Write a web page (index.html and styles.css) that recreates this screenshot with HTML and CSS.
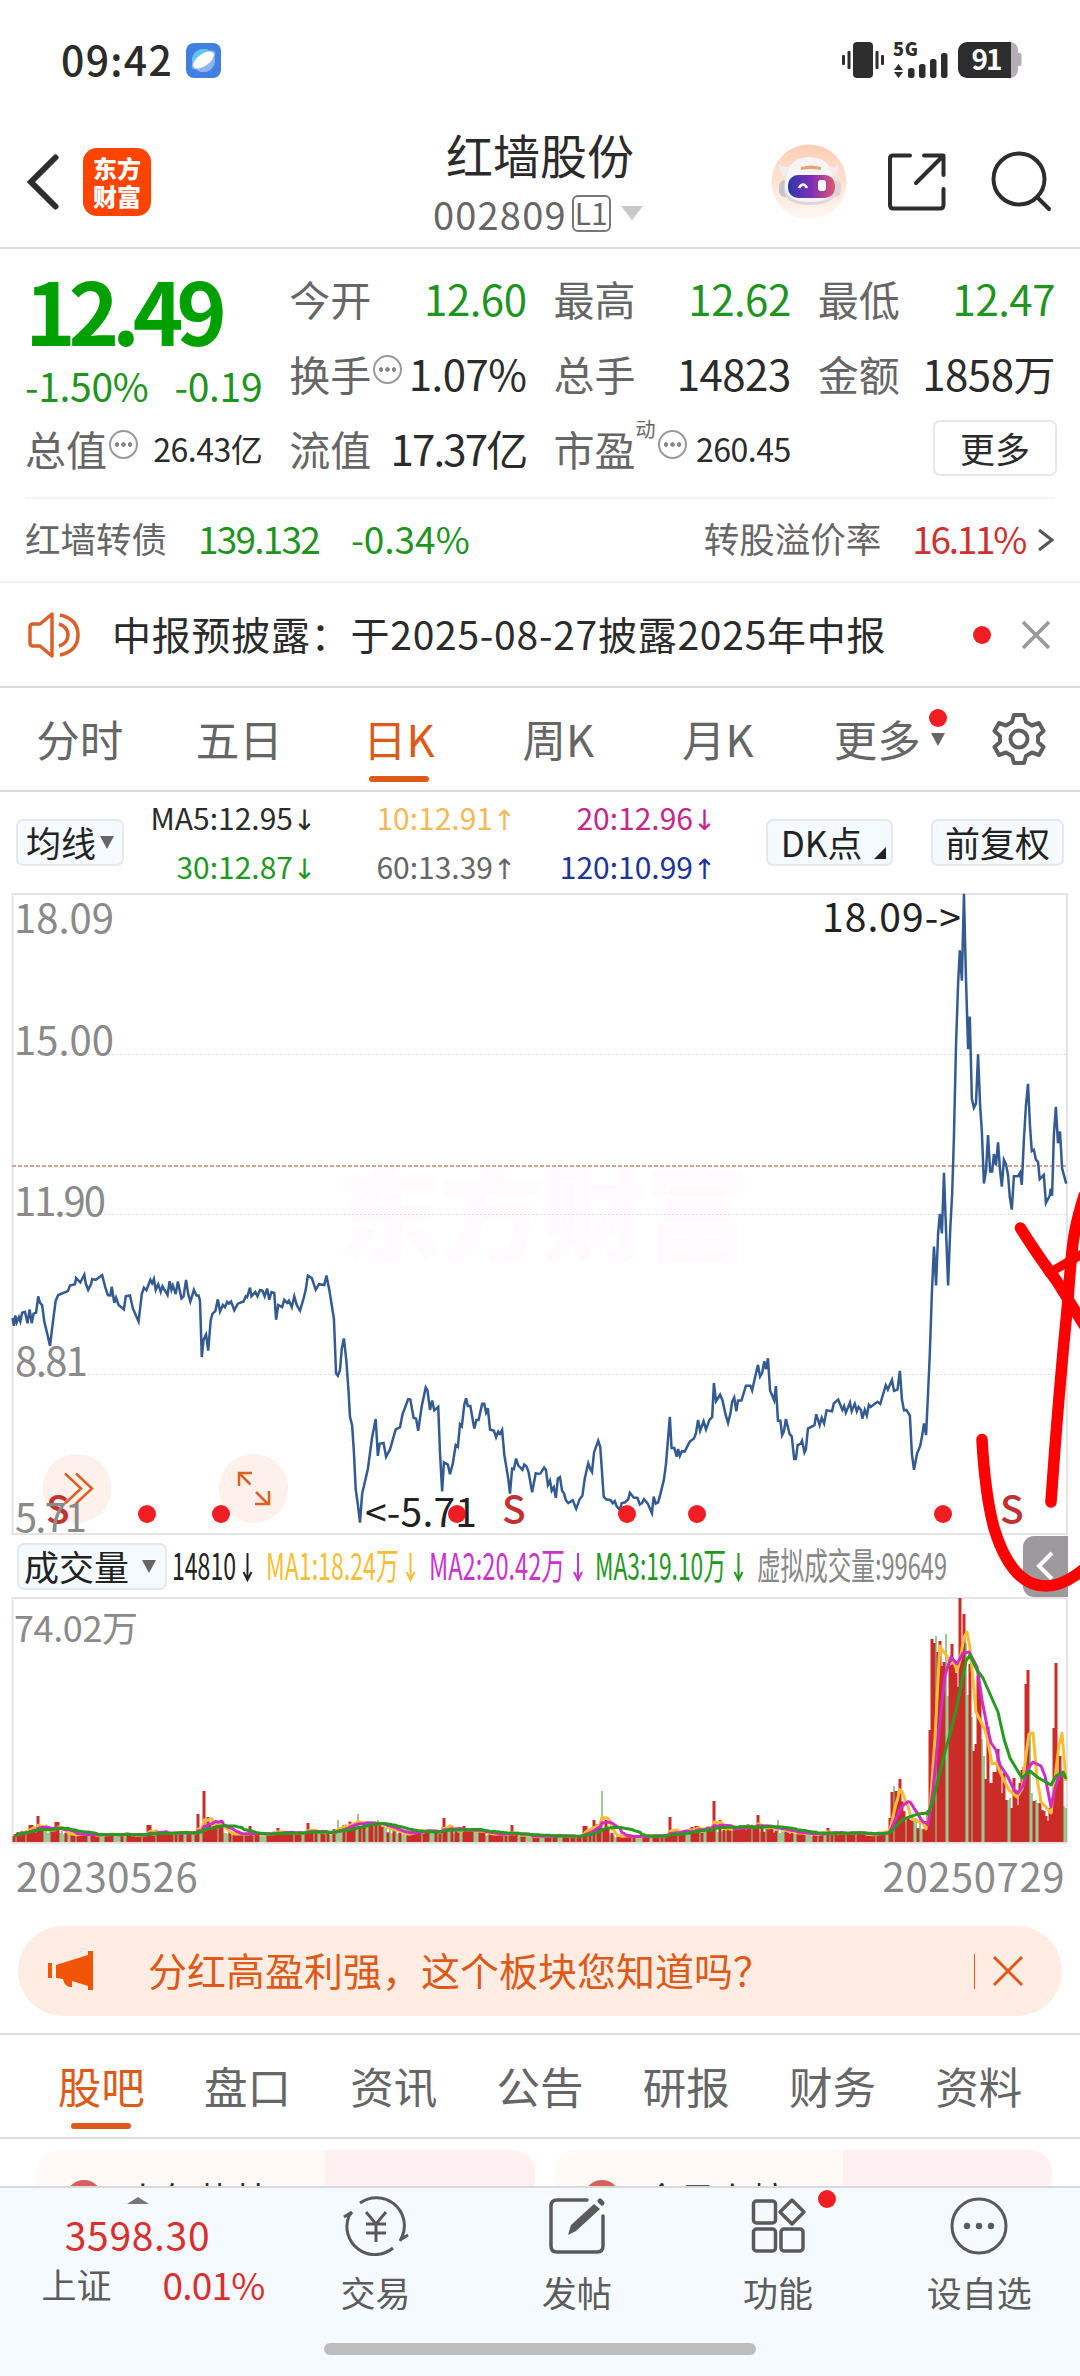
FILE: index.html
```html
<!DOCTYPE html>
<html lang="zh-CN">
<head>
    <meta charset="UTF-8">
    <meta name="viewport" content="width=device-width, initial-scale=1.0">
    <title>红墙股份 002809</title>
    <link rel="stylesheet" href="styles.css">
</head>
<body>
    <div class="page">
        <!-- 状态栏 -->
        <div class="status-bar">
            <span class="time">09:42</span>
            <svg class="app-dot" width="35" height="35" viewBox="0 0 35 35">
                <rect width="35" height="35" rx="8" fill="#4180df"/>
                <circle cx="17.5" cy="17.5" r="11.5" fill="#8fb2f0"/>
                <path d="M6 18a11.500 11.500 0 0 1 21-7L8 24z" fill="#5cc8fa"/>
                <ellipse cx="17.500" cy="17" rx="14" ry="6" fill="#8fb2f0" transform="rotate(-36 17.5 17)"/>
                <ellipse cx="17.500" cy="17" rx="12" ry="6" fill="#fff" transform="rotate(-36 17.5 17)"/>
            </svg>
            <svg class="status-icons" width="182" height="44" viewBox="840 38 182 44">
                <g fill="#2d2d2d">
                    <rect x="852" y="42" width="20" height="36" rx="4"/>
                    <rect x="841" y="55" width="3" height="10" rx="1"/>
                    <rect x="846.500" y="51" width="3" height="18" rx="1"/>
                    <rect x="874.500" y="51" width="3" height="18" rx="1"/>
                    <rect x="880" y="55" width="3" height="10" rx="1"/>
                    <path d="M893 70l4.500-6 4.500 6zM893 72h9l-4.500 6z"/>
                    <rect x="907" y="68" width="6.500" height="10" rx="2.500"/>
                    <rect x="918" y="64" width="6.500" height="14" rx="2.500"/>
                    <rect x="929" y="59" width="6.500" height="19" rx="2.500"/>
                    <rect x="940" y="53" width="6.500" height="25" rx="2.500"/>
                </g>
                <path d="M1005 42h4a8 8 0 0 1 8 8v3h2q1.500 0 1.500 1.500v10q0 1.500-1.500 1.500h-2v4a8 8 0 0 1-8 8h-4z" fill="#b4afb4"/>
                <path d="M1010 42h-44a9 9 0 0 0-9 9v18a9 9 0 0 0 9 9h44z" fill="#2d2d2d"/>
                <text class="net" x="892" y="55.500" textLength="25">5G</text>
                <text class="batt" x="970.500" y="70" textLength="31">91</text>
            </svg>
        </div>

        <!-- 标题 -->
        <header class="header">
            <svg class="back" width="34" height="56" viewBox="0 0 34 56"><path d="M29.500 3.500L5 28l24.500 24.500" fill="none" stroke="#2d2d2d" stroke-width="6" stroke-linecap="round" stroke-linejoin="miter"/></svg>
            <div class="brand"><span>东方</span><span>财富</span></div>
            <div class="title">
                <h1>红墙股份</h1>
                <div class="code">002809<span class="level">L1</span><i class="tri-down light"></i></div>
            </div>
            <div class="actions">
                <svg width="76" height="76" viewBox="0 0 76 76">
                    <defs>
                        <linearGradient id="halo" x1="0" y1="0" x2="0" y2="1"><stop offset="0" stop-color="#ffcdb4"/><stop offset="1" stop-color="#fff8f5"/></linearGradient>
                        <linearGradient id="visor"><stop offset="0" stop-color="#2d39a8"/><stop offset=".5" stop-color="#7f2eb8"/><stop offset="1" stop-color="#e0566e"/></linearGradient>
                    </defs>
                    <circle cx="38" cy="38" r="37.500" fill="url(#halo)"/>
                    <path d="M8 19q3 6 13 3l-3 12q-11-4-10-15zM67 19q-2 7-11 3l3 13q10-5 8-16z" fill="#f1edf0"/>
                    <rect x="8" y="36" width="12" height="17" rx="6" fill="#c9c4cb"/>
                    <rect x="58" y="36" width="12" height="17" rx="6" fill="#d9d5da"/>
                    <path d="M13 45q0-30 25-31 26 0 27 31 0 16-26 16-26 0-26-16z" fill="#dcd7dd"/>
                    <path d="M14 42q0-28 24-29 25 0 26 29 0 16-25 16T14 42z" fill="#f7f4f6"/>
                    <path d="M30 23q10-3 20 0v3q-10-2-20 0z" fill="#e0a878"/>
                    <rect x="17" y="31" width="47" height="23" rx="10" fill="url(#visor)"/>
                    <path d="M28 44q4-7 8 0" fill="none" stroke="#fff" stroke-width="2.500"/>
                    <rect x="47" y="36" width="8" height="11" rx="3" fill="#fff"/>
                </svg>
                <svg width="58" height="58" viewBox="0 0 58 58" fill="none" stroke="#2d2d2d" stroke-width="4" stroke-linecap="round" stroke-linejoin="round">
                    <path d="M22 2.500H5q-3 0-3 3V52q0 3.500 3.500 3.500H52q3.500 0 3.500-3.500V36M36 2.500h19.500V22M55 3L28 30"/>
                </svg>
                <svg width="62" height="62" viewBox="0 0 62 62" fill="none" stroke="#2d2d2d" stroke-width="4" stroke-linecap="round">
                    <circle cx="28" cy="28" r="25.500"/><path d="M47 47l11 11"/>
                </svg>
            </div>
        </header>

        <!-- 行情 -->
        <section class="quote">
            <div class="col">
                <div class="price">12.49</div>
                <div class="change"><span>-1.50%</span><span>-0.19</span></div>
                <div class="cell"><label>总值</label><i class="info"></i><b class="small">26.43亿</b></div>
            </div>
            <div class="col">
                <div class="cell"><label>今开</label><b class="green">12.60</b></div>
                <div class="cell"><label>换手</label><i class="info"></i><b>1.07%</b></div>
                <div class="cell"><label>流值</label><b class="tight">17.37亿</b></div>
            </div>
            <div class="col">
                <div class="cell"><label>最高</label><b class="green">12.62</b></div>
                <div class="cell"><label>总手</label><b>14823</b></div>
                <div class="cell"><label>市盈</label><sup>动</sup><i class="info"></i><b class="small">260.45</b></div>
            </div>
            <div class="col">
                <div class="cell"><label>最低</label><b class="green">12.47</b></div>
                <div class="cell"><label>金额</label><b>1858万</b></div>
                <div class="cell"><button class="more">更多</button></div>
            </div>
        </section>

        <div class="bond">
            <span class="bond-name">红墙转债</span>
            <span class="green bond-price">139.132</span>
            <span class="green">-0.34%</span>
            <span class="bond-rate">转股溢价率</span>
            <span class="red">16.11%</span>
            <svg width="18" height="28" viewBox="0 0 18 28"><path d="M2 4l13 10L2 24" fill="none" stroke="#555" stroke-width="3"/></svg>
        </div>

        <div class="notice">
            <svg width="54" height="48" viewBox="0 0 54 48" fill="none" stroke="#d9602a" stroke-width="3.500" stroke-linejoin="round">
                <path d="M24 3v42L12 35H5q-3 0-3-3V16q0-3 3-3h7zM31 13q9 3 9 11t-9 11M32 4q18 4 18 20T32 44"/>
            </svg>
            <p>中报预披露：于2025-08-27披露2025年中报</p>
            <i class="dot"></i>
            <svg class="close" width="30" height="30" viewBox="0 0 30 30"><path d="M2 2l26 26M28 2L2 28" stroke="#999" stroke-width="3.500"/></svg>
        </div>

        <!-- 周期切换 -->
        <nav class="periods">
            <a>分时</a><a>五日</a><a class="on">日K</a><a>周K</a><a>月K</a>
            <a>更多<i class="dot badge"></i><i class="tri-down mark"></i></a>
            <svg width="54" height="56" viewBox="-27 -28 54 56" fill="none" stroke="#5f5f5f" stroke-width="4" stroke-linejoin="round">
                <path d="M-5-24H5L7-17 13-13.500 20-16 24.500-8 19-3V3L24.500 8 20 16 13 13.500 7 17 5 24H-5L-7 17-13 13.500-20 16-24.500 8-19 3V-3L-24.500-8-20-16-13-13.500-7-17z"/>
                <circle r="8.500"/>
            </svg>
        </nav>

        <div class="ma-row">
            <span class="chip">均线<i class="tri-down"></i></span>
            <div class="ma-list">
                <span>MA5:12.95<em>↓</em></span>
                <span class="c10">10:12.91<em>↑</em></span>
                <span class="c20">20:12.96<em>↓</em></span>
                <span class="c30">30:12.87<em>↓</em></span>
                <span class="c60">60:13.39<em>↑</em></span>
                <span class="c120">120:10.99<em>↑</em></span>
            </div>
            <span class="chip dk">DK点<i class="corner"></i></span>
            <span class="chip fq">前复权</span>
        </div>

        <!-- K线 -->
        <svg class="chart" width="1080" height="643" viewBox="0 892 1080 643">
            <text class="watermark" x="337" y="1254" textLength="412">东方财富</text>
            <g class="grid">
                <path d="M12 1054.500H1067M12 1214.500H1067M12 1374.500H1067" stroke-dasharray="2 2"/>
            </g>
            <rect class="frame" x="12.500" y="894" width="1054.500" height="640"/>
            <circle class="round-btn" cx="77" cy="1488.500" r="34.500"/>
            <circle class="round-btn" cx="253.500" cy="1488.500" r="34.500"/>
            <g class="btn-icon">
                <path d="M65 1473.500l16 15-16 15M76 1473.500l16 15-16 15"/>
                <path d="M252 1473h-13v13M239.500 1473.500l11 11M256 1492l12 12M269 1491v13h-14"/>
            </g>
            <path class="last-price" d="M12 1166H1067"/>
            <g transform="translate(0 880) scale(.35714 .43367)">
                <polyline class="price-line" points="35,1010 39,1028 43,1004 47,1020 53,1008 57,1018 62,998 70,996 77,1022 83,990 89,1022 94,1000 101,998 107,960 112,975 118,980 124,1018 132,1045 140,1074 148,1020 156,970 163,957 190,948 196,935 210,932 213,918 225,928 236,910 240,930 247,945 255,932 258,920 268,922 286,911 295,940 302,957 309,958 313,938 320,975 325,963 332,980 347,990 352,960 364,958 372,988 388,1018 397,955 403,940 410,946 421,922 426,930 431,920 436,945 443,932 450,950 455,937 469,957 475,925 480,945 484,935 492,955 498,926 508,965 514,960 521,922 527,955 533,972 543,945 550,958 556,958 560,970 565,1100 570,1060 577,1048 583,1085 590,1015 595,1000 603,994 610,967 616,995 624,980 630,985 636,973 641,977 647,972 656,992 666,977 682,972 688,960 692,962 700,940 704,960 715,950 721,960 728,946 735,947 741,960 748,942 754,968 760,950 768,952 773,1014 779,980 790,985 796,968 804,975 809,970 817,985 824,960 831,980 840,993 850,965 856,945 862,912 873,918 884,945 893,932 908,934 914,912 922,945 935,1012 941,1138 946,1143 952,1130 957,1080 963,1057 970,1110 976,1180 980,1238 986,1258 991,1320 996,1405 1002,1440 1008,1482 1014,1415 1030,1358 1042,1285 1052,1243 1058,1328 1063,1300 1074,1298 1081,1330 1092,1313 1108,1267 1120,1262 1127,1232 1143,1197 1149,1198 1158,1240 1165,1242 1171,1270 1181,1213 1192,1170 1197,1177 1204,1222 1210,1200 1216,1223 1227,1215 1232,1320 1238,1410 1243,1343 1254,1348 1260,1370 1268,1345 1276,1303 1282,1307 1288,1255 1293,1260 1300,1210 1305,1195 1310,1213 1317,1213 1328,1265 1334,1245 1340,1245 1350,1208 1356,1208 1361,1228 1366,1218 1372,1267 1383,1270 1389,1285 1395,1272 1400,1277 1406,1268 1412,1325 1423,1380 1428,1415 1434,1357 1439,1358 1445,1334 1451,1350 1463,1360 1468,1348 1474,1352 1480,1365 1490,1412 1500,1368 1512,1370"/>
            </g>
            <g transform="translate(540 880) scale(.34439 .43367)">
                <polyline class="price-line" points="0,1370 12,1355 17,1360 23,1395 29,1385 34,1408 40,1400 46,1425 52,1380 58,1377 64,1408 70,1415 75,1430 82,1437 95,1430 105,1450 115,1428 123,1420 130,1380 140,1345 146,1358 151,1365 157,1320 169,1293 175,1308 185,1422 192,1428 205,1430 211,1437 217,1432 222,1443 232,1453 237,1437 247,1435 256,1428 261,1413 272,1424 283,1425 290,1440 296,1437 302,1428 313,1438 325,1460 330,1422 336,1438 343,1435 350,1415 360,1382 366,1345 377,1238 382,1310 390,1310 397,1330 401,1312 406,1328 412,1317 420,1318 435,1295 447,1288 453,1275 459,1245 465,1270 475,1248 482,1267 492,1245 500,1238 505,1160 511,1202 523,1187 530,1200 538,1230 546,1252 553,1230 558,1203 564,1193 570,1225 575,1200 585,1200 598,1166 611,1166 616,1177 625,1145 633,1118 639,1145 645,1137 651,1110 656,1128 662,1103 668,1177 680,1200 685,1167 691,1247 698,1247 703,1280 708,1272 714,1243 725,1278 731,1283 738,1335 743,1335 748,1303 757,1300 761,1293 768,1320 772,1313 778,1265 797,1257 802,1232 812,1257 818,1240 825,1253 832,1223 848,1225 853,1207 866,1198 878,1222 883,1213 888,1228 895,1215 900,1205 905,1225 914,1208 920,1225 925,1215 932,1222 936,1242 943,1222 949,1235 955,1210 960,1215 980,1203 988,1208 1004,1165 1010,1175 1022,1153 1028,1178 1038,1175 1045,1132 1051,1198 1057,1223 1064,1222 1074,1235 1080,1325 1086,1360 1095,1322 1104,1305 1110,1280 1115,1253 1121,1280 1127,1180 1132,1090 1138,950 1144,845 1150,935 1156,815 1161,770 1167,815 1173,675 1180,830 1185,935 1191,810 1197,720 1202,590 1208,380 1214,240 1219,162 1225,232 1231,32 1237,230 1243,390 1248,315 1254,505 1260,525 1266,515 1272,402 1278,520 1283,580 1289,700 1295,670 1301,588 1307,672 1313,672 1318,632 1324,658 1330,605 1336,670 1341,707 1347,645 1353,655 1359,680 1364,730 1370,760 1376,683 1388,683 1394,675 1399,703 1405,600 1411,520 1417,470 1423,570 1428,625 1434,622 1440,645 1446,650 1451,690 1463,680 1469,745 1480,728 1483,712 1487,728 1492,590 1498,523 1504,607 1510,580 1516,665 1528,700"/>
            </g>
            <g class="event">
                <circle cx="147" cy="1514" r="9"/><circle cx="221" cy="1514" r="9"/><circle cx="457" cy="1514" r="9"/>
                <circle cx="627" cy="1514" r="9"/><circle cx="697" cy="1514" r="9"/><circle cx="943" cy="1514" r="9"/>
            </g>
            <g class="sell"><text x="46" y="1524">S</text><text x="502" y="1524">S</text><text x="1000" y="1524">S</text></g>
            <g class="axis">
                <text x="14" y="933" textLength="100">18.09</text>
                <text x="14" y="1055" textLength="100">15.00</text>
                <text x="14" y="1216" textLength="92">11.90</text>
                <text x="15" y="1376" textLength="73">8.81</text>
                <text x="15" y="1532" textLength="72">5.71</text>
            </g>
            <text class="mark-text" x="822" y="932" textLength="139">18.09-&gt;</text>
            <text class="mark-text" x="365" y="1527" textLength="112">&lt;-5.71</text>
        </svg>

        <div class="vol-head">
            <span class="chip">成交量<i class="tri-down"></i></span>
            <svg class="vol-text" width="790" height="50" viewBox="170 1541 790 50">
                <text x="172" y="1580" fill="#222" textLength="64" lengthAdjust="spacingAndGlyphs">14810</text>
                <text x="266" y="1580" fill="#f3bf36" textLength="133" lengthAdjust="spacingAndGlyphs">MA1:18.24万</text>
                <text x="429" y="1580" fill="#cc33cc" textLength="136" lengthAdjust="spacingAndGlyphs">MA2:20.42万</text>
                <text x="595" y="1580" fill="#1f981f" textLength="131" lengthAdjust="spacingAndGlyphs">MA3:19.10万</text>
                <text x="757" y="1580" fill="#888" textLength="190" lengthAdjust="spacingAndGlyphs">虚拟成交量:99649</text>
                <g fill="none" stroke-width="2">
                    <path d="M247.500 1553v27m-4-8l4 8 4-8" stroke="#222"/>
                    <path d="M410.500 1553v27m-4-8l4 8 4-8" stroke="#f3bf36"/>
                    <path d="M578 1553v27m-4-8l4 8 4-8" stroke="#cc33cc"/>
                    <path d="M738.500 1553v27m-4-8l4 8 4-8" stroke="#1f981f"/>
                </g>
            </svg>
            <span class="fold"><svg width="20" height="32" viewBox="0 0 20 32"><path d="M16 3L3 16l13 13" fill="none" stroke="#fff" stroke-width="4"/></svg></span>
        </div>

        <!-- 成交量 -->
        <svg class="volume" width="1080" height="247" viewBox="0 1597 1080 247">
            <rect class="frame" x="12.500" y="1598" width="1054.500" height="245"/>
            <g id="bars"></g>
            <g id="lines"></g>
            <text class="axis-vol" x="14" y="1642" textLength="124">74.02万</text>
        </svg>
        <div class="dates"><span>20230526</span><span>20250729</span></div>

        <div class="banner">
            <svg width="46" height="40" viewBox="0 0 46 40" fill="#f25407"><path d="M0 12h4v15H0zM8 14L40 4V0h5v39h-5v-4l-16-5v6q-7 1-9-8l-7-1z"/></svg>
            <p>分红高盈利强，这个板块您知道吗？</p>
            <i class="bar"></i>
            <svg width="32" height="32" viewBox="0 0 32 32"><path d="M2 2l28 28M30 2L2 30" stroke="#e0591b" stroke-width="3"/></svg>
        </div>

        <nav class="sections">
            <a class="on">股吧</a><a>盘口</a><a>资讯</a><a>公告</a><a>研报</a><a>财务</a><a>资料</a>
        </nav>

        <div class="cards">
            <div class="card"><i></i><span>上午热帖</span></div>
            <div class="card"><i></i><span>今日上榜</span></div>
        </div>

        <!-- 底部栏 -->
        <footer class="tabbar">
            <div class="index">
                <i class="tri-up"></i>
                <div class="point">3598.30</div>
                <div class="index-row"><span>上证</span><b>0.01%</b></div>
            </div>
            <div class="tab">
                <svg width="66" height="60" viewBox="-33 -30 66 60" fill="none" stroke="#5a5a5a" stroke-width="3">
                    <path d="M-16-23A28 28 0 0 1 26 11M17 22A28 28 0 0 1-27-10M-32-9l8-5M32 9l-8 5M26 11l-2 4M-27-10l3-4"/>
                    <path d="M-10-14L0-2l10-12M0-2v18M-10-2h20M-10 7h20"/>
                </svg>
                <span>交易</span>
            </div>
            <div class="tab">
                <svg width="60" height="60" viewBox="-30 -30 60 60" fill="none" stroke="#5a5a5a" stroke-width="3.500" stroke-linecap="round">
                    <path d="M10-26h-30q-6 0-6 6v40q0 6 6 6h40q6 0 6-6v-30"/>
                    <path d="M-9 9l3-10L17-22l6 5L-1 5z" fill="#5a5a5a" stroke="none"/>
                    <path d="M23-25l2 2" stroke-width="5"/>
                </svg>
                <span>发帖</span>
            </div>
            <div class="tab">
                <svg width="60" height="60" viewBox="-30 -30 60 60" fill="none" stroke="#5a5a5a" stroke-width="3.500" stroke-linejoin="round">
                    <rect x="-24.500" y="-25" width="22" height="22" rx="3"/><rect x="-24.500" y="3" width="22" height="22" rx="3"/><rect x="3" y="3" width="22" height="22" rx="3"/>
                    <path d="M14-26l12 12-12 12L2-14z"/>
                </svg>
                <i class="dot badge"></i>
                <span>功能</span>
            </div>
            <div class="tab">
                <svg width="60" height="60" viewBox="-30 -30 60 60"><circle r="27" fill="none" stroke="#5a5a5a" stroke-width="3"/><g fill="#5a5a5a"><circle cx="-12" r="3.200"/><circle r="3.200"/><circle cx="12" r="3.200"/></g></svg>
                <span>设自选</span>
            </div>
            <i class="home"></i>
        </footer>

        <!-- 手绘标注 -->
        <svg class="scribble" width="1080" height="2376" viewBox="0 0 1080 2376">
            <path d="M1020.500 1228Q1036 1253 1056 1280L1084 1325M1051 1502Q1058 1400 1068 1300 1071 1255 1074 1236 1077 1218 1084 1196"/>
            <path d="M1049 1273l35-20" stroke-width="9"/>
            <path d="M982 1439.500C984 1475 987 1502 994 1528 1004 1561 1020 1586 1046 1586 1060 1586 1072 1579 1084 1569"/>
        </svg>
    </div>
    <script src="chart.js"></script>
</body>
</html>
```
FILE: styles.css
```css
* {
    box-sizing: border-box;
}
body {
    margin: 0;
    background: #fff;
    color: #2b2b2b;
    font-family: "Noto Sans CJK SC", "Noto Sans", sans-serif;
}
.page {
    position: relative;
    display: flex;
    flex-direction: column;
    width: 1080px;
    height: 2376px;
    overflow: hidden;
}
.page > * {
    flex-shrink: 0;
}
svg {
    display: block;
    flex-shrink: 0;
}
i, em {
    font-style: normal;
}
.green {
    color: #1f941f !important;
}
.red {
    color: #cf3030;
    letter-spacing: -2.300px;
}
.dot {
    width: 18px;
    height: 18px;
    border-radius: 50%;
    background: #f01e23;
}
.tri-down {
    display: inline-block;
    border: 7px solid transparent;
    border-top: 13px solid #666;
    border-bottom: 0;
}

/* 状态栏 */
.status-bar {
    display: flex;
    align-items: center;
    height: 120px;
    padding: 0 57px 0 61px;
}
.time {
    width: 125px;
    margin-top: -5px;
    font-size: 41px;
    font-weight: 500;
    letter-spacing: 1.300px;
}
.status-icons {
    margin-left: auto;
}
.net {
    font-size: 18px;
    font-weight: 900;
    fill: #2d2d2d;
}
.batt {
    font-size: 28px;
    font-weight: 700;
    fill: #fff;
}

/* 标题 */
.header {
    display: flex;
    align-items: center;
    height: 129px;
    padding: 0 27px 4px 26px;
    border-bottom: 2px solid #dcdcdc;
}
.brand {
    display: flex;
    flex-direction: column;
    justify-content: center;
    width: 68px;
    height: 68px;
    margin-left: 23px;
    border-radius: 14px;
    background: #ff4400;
    color: #fff;
    font-size: 24px;
    font-weight: 900;
    line-height: 28px;
    text-align: center;
}
.title {
    width: 240px;
    margin: 3px 0 0 269px;
    text-align: center;
}
.title h1 {
    margin: 0;
    font-size: 47px;
    font-weight: 400;
    line-height: 60px;
}
.code {
    display: flex;
    align-items: center;
    height: 58px;
    padding-left: 13px;
    color: #666;
    font-size: 38px;
    letter-spacing: 1.200px;
}
.level {
    width: 39px;
    height: 37px;
    margin-left: 5px;
    border: 2px solid #777;
    border-radius: 6px;
    font-size: 30px;
    line-height: 31px;
    letter-spacing: 0;
}
.tri-down.light {
    margin-left: 10px;
    border-width: 14px 11px 0;
    border-top-color: #c8c8c8;
}
.actions {
    display: flex;
    align-items: center;
    margin-left: auto;
}
.actions svg:nth-child(2) {
    margin: 0 45px 0 41px;
}

/* 行情 */
.quote {
    display: flex;
    gap: 27px;
    height: 250px;
    margin: 0 25px;
    padding-top: 11px;
    border-bottom: 2px solid #f4f4f4;
}
.col {
    flex: 1;
    width: 0;
}
.price {
    height: 100px;
    color: #00a000;
    font-size: 86px;
    font-weight: 700;
    line-height: 98px;
    letter-spacing: -7.200px;
}
.change {
    display: flex;
    justify-content: space-between;
    height: 50px;
    color: #1f941f;
    font-size: 39px;
    line-height: 50px;
    letter-spacing: -0.300px;
}
.cell {
    display: flex;
    align-items: center;
    height: 75px;
    white-space: nowrap;
}
.cell label {
    color: #666;
    font-size: 41px;
}
.cell b {
    margin-left: auto;
    font-size: 42px;
    font-weight: 400;
    letter-spacing: -0.500px;
}
.cell b.small {
    font-size: 32px;
}
.cell b.tight {
    letter-spacing: -1.800px;
}
.cell sup {
    align-self: flex-start;
    margin-top: 5px;
    color: #666;
    font-size: 20px;
    line-height: 28px;
}
.info {
    width: 29px;
    height: 29px;
    margin: -6px 0 0 2px;
    border: 2px solid #999;
    border-radius: 50%;
    background:
        radial-gradient(circle at 6px 12.500px, #888 2px, transparent 2.500px),
        radial-gradient(circle at 12.500px 12.500px, #888 2px, transparent 2.500px),
        radial-gradient(circle at 19px 12.500px, #888 2px, transparent 2.500px);
}
.more {
    width: 124px;
    height: 56px;
    margin: 0 -2px 0 auto;
    padding: 0;
    border: 2px solid #e8e6e8;
    border-radius: 7px;
    background: #fff;
    color: #2b2b2b;
    font: inherit;
    font-size: 35px;
    line-height: 48px;
}

.bond {
    display: flex;
    align-items: center;
    height: 84px;
    padding: 0 25px 5px;
    border-bottom: 2px solid #efefef;
    color: #666;
    font-size: 37px;
}
.bond-name, .bond-rate {
    font-size: 35.500px;
}
.bond-price {
    margin: 0 32px 0 31px;
    letter-spacing: -1.800px;
}
.bond-rate {
    margin: 0 31px 0 auto;
}
.bond svg {
    margin: 4px 0 0 12px;
}

.notice {
    display: flex;
    align-items: center;
    height: 105px;
    padding: 0 29px 0 28px;
    border-bottom: 2px solid #dcdcdc;
}
.notice p {
    margin: -3px auto 0 30px;
    font-size: 39px;
    letter-spacing: 0.750px;
    white-space: nowrap;
}
.close {
    margin-left: 30px;
}

/* 周期 */
.periods {
    display: flex;
    align-items: center;
    height: 104px;
    border-bottom: 2px solid #dcdcdc;
    color: #666;
    font-size: 43.500px;
}
.periods a {
    position: relative;
    width: 159.500px;
    height: 102px;
    line-height: 102px;
    text-align: center;
}
.periods svg {
    margin-left: 35px;
}
.on {
    color: #dd5a18;
}
.on::after {
    content: "";
    position: absolute;
    left: 50%;
    bottom: 8px;
    width: 60px;
    height: 6px;
    margin-left: -30px;
    border-radius: 3px;
    background: #dd5a18;
}
.periods .badge {
    position: absolute;
    left: 131px;
    top: 21px;
}
.periods .mark {
    position: absolute;
    left: 133px;
    top: 45px;
}

.ma-row {
    display: flex;
    align-items: center;
    height: 100px;
    padding: 0 16px;
}
.chip {
    display: flex;
    align-items: center;
    justify-content: center;
    gap: 4px;
    width: 108px;
    height: 47px;
    border: 2px solid #e4e9ef;
    border-radius: 7px;
    background: #f5faff;
    color: #222;
    font-size: 35px;
    line-height: 40px;
    white-space: nowrap;
}
.ma-list {
    display: grid;
    grid-template-columns: 193px 200px 200px;
    grid-template-rows: 49px 49px;
    width: 593px;
    text-align: right;
    font-size: 30px;
    line-height: 48px;
}
.ma-list em {
    display: inline-block;
    width: 24px;
    text-align: center;
    font-family: "DejaVu Sans", sans-serif;
    font-size: 28px;
    text-indent: -1px;
}
.c10 { color: #f3b95a; }
.c20 { color: #c5278a; }
.c30 { color: #1f981f; }
.c60 { color: #666; }
.c120 { color: #1d3596; }
.dk {
    position: relative;
    width: 127px;
    margin-left: 49px;
    padding-right: 16px;
}
.corner {
    position: absolute;
    right: 5px;
    bottom: 5px;
    border: 6px solid #222;
    border-top-color: transparent;
    border-left-color: transparent;
}
.fq {
    width: 133px;
    margin-left: auto;
}

/* 图表 */
.frame {
    fill: none;
    stroke: #e4e4e4;
    stroke-width: 2;
}
.grid path {
    fill: none;
    stroke: #dedede;
    stroke-width: 1;
}
.price-line {
    fill: none;
    stroke: #335b92;
    stroke-width: 2.500;
    vector-effect: non-scaling-stroke;
}
.last-price {
    stroke: #d3a891;
    stroke-width: 2;
    stroke-dasharray: 4 2;
}
.watermark {
    fill: #fefafe;
    font-size: 104px;
    font-weight: 900;
}
.round-btn {
    fill: #fef0ea;
}
.btn-icon path {
    fill: none;
    stroke: #dd6023;
    stroke-width: 2.500;
}
.event {
    fill: #f01e23;
}
.sell {
    fill: #c13333;
    font-size: 39px;
    font-weight: 500;
}
.axis {
    fill: #8a8a8a;
    font-size: 40px;
}
.mark-text {
    fill: #222;
    font-size: 39px;
}
.axis-vol {
    fill: #8a8a8a;
    font-size: 36px;
}
.vol-head {
    display: flex;
    align-items: center;
    height: 62px;
    padding: 0 12px 0 17px;
}
.vol-head .chip {
    gap: 13px;
    width: 150px;
    padding-right: 4px;
}
.vol-text {
    margin-left: 3px;
    font-size: 37px;
}
.fold {
    display: flex;
    align-items: center;
    justify-content: center;
    width: 45px;
    height: 61px;
    margin-left: auto;
    border-radius: 11px 0 0 11px;
    background: #9c9a9d;
}
.dates {
    display: flex;
    justify-content: space-between;
    height: 82px;
    padding: 0 15px 0 16px;
    color: #8a8a8a;
    font-size: 40px;
    line-height: 62px;
    letter-spacing: 0.600px;
}

.banner {
    display: flex;
    align-items: center;
    height: 90px;
    margin: 0 18px;
    padding: 0 38px 0 30px;
    border-radius: 45px;
    background: #ffede4;
    color: #dd5a18;
    font-size: 39px;
}
.banner p {
    margin: -4px auto 0 54px;
}
.bar {
    width: 1px;
    height: 35px;
    margin-right: 17px;
    background: #dd5a18;
}

.sections {
    display: flex;
    height: 106px;
    margin-top: 17px;
    padding: 0 28px;
    border-top: 2px solid #dcdcdc;
    border-bottom: 2px solid #dcdcdc;
    color: #666;
    font-size: 43.500px;
    line-height: 101px;
}
.sections a {
    position: relative;
    flex: 1;
    text-align: center;
}

.cards {
    display: flex;
    gap: 19px;
    height: 47px;
    padding: 11px 28px 0 36px;
    overflow: hidden;
}
.card {
    display: flex;
    flex: 1;
    height: 120px;
    padding: 30px 30px;
    border-radius: 22px;
    background: linear-gradient(90deg, #fffaf6 58%, #fff0f2 58%);
}
.card i {
    width: 36px;
    height: 36px;
    border-radius: 50%;
    background: #d9605a;
}
.card span {
    margin-left: 24px;
    font-size: 36px;
    line-height: 37px;
}

/* 底部 */
.tabbar {
    position: relative;
    display: flex;
    height: 191px;
    border-top: 2px solid #d6dade;
    background: #f5faff;
    color: #5c5c5c;
}
.index {
    display: flex;
    flex-direction: column;
    align-items: center;
    width: 275px;
    padding-top: 9px;
}
.tri-up {
    border: 11px solid transparent;
    border-top: 0;
    border-bottom: 7px solid #777;
}
.point {
    color: #d8302f;
    font-size: 39px;
    line-height: 61px;
    letter-spacing: 0.700px;
}
.index-row {
    display: flex;
    justify-content: space-between;
    width: 223px;
    margin-left: 31px;
    font-size: 35px;
    line-height: 38px;
}
.index-row b {
    color: #d8302f;
    font-size: 37px;
    font-weight: 400;
    letter-spacing: -0.800px;
}
.tab {
    position: relative;
    display: flex;
    flex: 1;
    flex-direction: column;
    align-items: center;
    padding-top: 8px;
    font-size: 35px;
}
.tab span {
    margin-top: 8px;
    line-height: 56px;
}
.tab .badge {
    position: absolute;
    left: 140px;
    top: 2px;
}
.home {
    position: absolute;
    left: 324px;
    bottom: 22px;
    width: 432px;
    height: 12px;
    border-radius: 6px;
    background: #bdbdbd;
}
.scribble {
    position: absolute;
    left: 0;
    top: 0;
    fill: none;
    stroke: #f00;
    stroke-width: 11.500;
    stroke-linecap: round;
    stroke-linejoin: round;
    pointer-events: none;
}
```
FILE: chart.js
```js
const NS = 'http://www.w3.org/2000/svg';
const BASE = 1842;
const COUNT = 527;
const LEFT = 14;
const STEP = 2;

// 基础量能 [x, 高度]
const level = [[12, 8], [41, 13], [76, 7], [200, 9], [213, 18], [235, 8], [324, 9], [358, 19], [405, 9], [440, 13],
    [496, 8], [578, 5], [600, 17], [616, 6], [661, 6], [690, 12], [757, 15], [806, 9], [888, 9], [897, 40], [912, 20], [926, 18]];
// 放量日 [x, 高度, 绿]
const spikes = [[31, 17], [38, 26], [57, 20], [149, 17], [198, 28], [204, 51], [208, 25], [250, 16], [278, 14], [308, 19],
    [338, 22, 1], [358, 28, 1], [378, 22, 1], [444, 24], [464, 16], [512, 17], [585, 16], [594, 22], [602, 51, 1], [606, 22],
    [670, 25], [697, 16], [714, 41], [720, 22], [758, 27], [778, 22, 1], [828, 14], [890, 24], [892, 50], [894, 56, 1], [896, 51], [900, 63]];
// 近期量能, 从 x=928 起逐日; 负数为绿柱
const recent = [32, 112, 203, 199, -206, 190, 201, 176, 180, -208, -146, 179, 198, 179, 169, 155, 244, 200, 228, -199, -147,
    178, -125, 91, 98, 166, 155, -103, -86, 63, 115, 59, 59, 70, 70, 93, 75, 49, 69, 42, -42, -44, 34, 64, 52, 37,
    59, 72, 75, 158, 172, -109, -49, 41, -42, -39, 39, 32, 31, 26, 21, 34, 29, 114, 179, 66, 86, 69, -36, -34];

let seed = 7;
function rand() {
    seed = (seed * 16807) % 2147483647;
    return seed / 2147483647;
}

function base(x) {
    for (let i = 1; i < level.length; i++) {
        if (x <= level[i][0]) {
            const [x0, a] = level[i - 1];
            const [x1, b] = level[i];
            return a + (b - a) * (x - x0) / (x1 - x0);
        }
    }
    return 18;
}

const data = [];
for (let i = 0; i < COUNT; i++) {
    const x = LEFT + i * STEP;
    let h = base(x) * (0.7 + rand() * 0.55);
    let green = rand() < 0.38;
    const hit = spikes.find(s => Math.abs(s[0] - x) < 1.01);
    if (hit) {
        h = hit[1];
        green = !!hit[2];
    }
    const k = Math.round((x - 928) / STEP);
    if (k >= 0 && k < recent.length) {
        h = Math.abs(recent[k]);
        green = recent[k] < 0;
    }
    data.push({ x, h, green });
}

const bars = document.getElementById('bars');
data.forEach(d => {
    const r = document.createElementNS(NS, 'rect');
    r.setAttribute('x', d.green ? d.x - 0.5 : d.x - 1.5);
    r.setAttribute('y', BASE - d.h);
    r.setAttribute('width', d.green ? 1 : 3);
    r.setAttribute('height', d.h);
    r.setAttribute('fill', d.green ? '#3f8f2c' : '#cc2c28');
    bars.appendChild(r);
});

// 近期均线
const tails = {
    5: [[926, 1829], [930, 1810], [935, 1738], [938, 1680], [940, 1646], [943, 1651], [947, 1656], [950, 1664], [954, 1662], [957, 1671], [960, 1660], [964, 1637], [967, 1632], [970, 1648], [973, 1680], [976, 1712], [981, 1722], [985, 1730], [988, 1741], [992, 1764], [997, 1763], [1000, 1772], [1004, 1780], [1009, 1790], [1017, 1797], [1022, 1789], [1026, 1755], [1029, 1734], [1033, 1733], [1037, 1778], [1041, 1802], [1045, 1806], [1051, 1813], [1056, 1770], [1059, 1745], [1062, 1733], [1066, 1781]],
    10: [[928, 1825], [933, 1790], [939, 1730], [945, 1675], [951, 1657], [957, 1664], [963, 1653], [969, 1652], [977, 1667], [982, 1700], [987, 1726], [991, 1743], [996, 1750], [1000, 1765], [1008, 1777], [1014, 1790], [1018, 1793], [1023, 1786], [1028, 1768], [1033, 1762], [1041, 1766], [1045, 1776], [1051, 1807], [1055, 1788], [1059, 1776], [1066, 1775]],
    20: [[928, 1814], [933, 1800], [938, 1780], [945, 1752], [951, 1730], [957, 1706], [962, 1680], [966, 1661], [970, 1655], [977, 1670], [983, 1678], [990, 1694], [998, 1712], [1004, 1739], [1010, 1758], [1016, 1768], [1022, 1778], [1030, 1771], [1037, 1777], [1051, 1785], [1056, 1776], [1063, 1772], [1066, 1779]]
};
const colors = { 5: '#f8bd32', 10: '#d22cc8', 20: '#289a20' };

[5, 10, 20].forEach(n => {
    const pts = [];
    data.forEach((d, i) => {
        if (d.x >= tails[n][0][0]) return;
        const part = data.slice(Math.max(0, i - n + 1), i + 1);
        const avg = part.reduce((s, p) => s + p.h, 0) / part.length;
        pts.push([d.x, BASE - avg]);
    });
    const line = document.createElementNS(NS, 'polyline');
    line.setAttribute('points', pts.concat(tails[n]).map(p => p.join(',')).join(' '));
    line.setAttribute('fill', 'none');
    line.setAttribute('stroke', colors[n]);
    line.setAttribute('stroke-width', 3);
    line.setAttribute('stroke-linejoin', 'round');
    document.getElementById('lines').appendChild(line);
});
```
